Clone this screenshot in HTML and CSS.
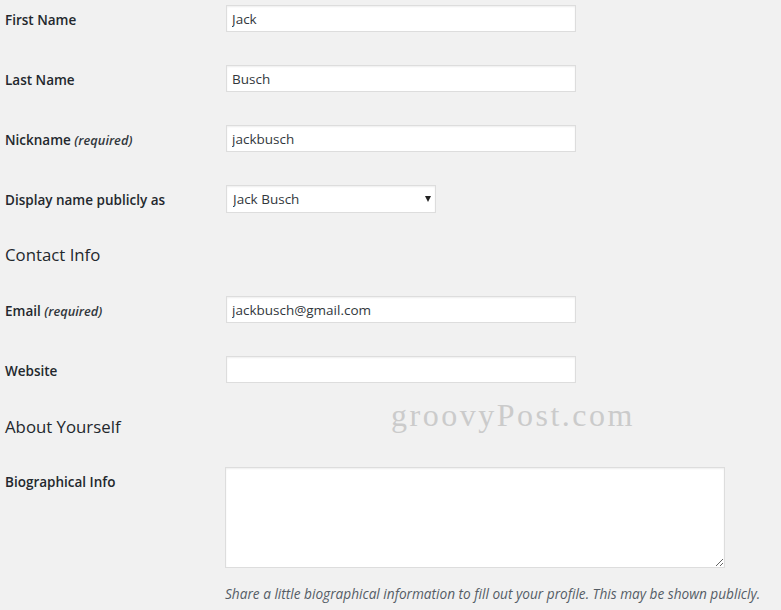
FILE: index.html
```html
<!DOCTYPE html>
<html lang="en">
<head>
<meta charset="utf-8">
<title>Profile</title>
<link rel="stylesheet" href="styles.css">
</head>
<body>
<div class="page">
  <div class="row">
    <label class="label" for="first">First Name</label>
    <input class="text-input" id="first" type="text" value="Jack">
  </div>
  <div class="row">
    <label class="label" for="last">Last Name</label>
    <input class="text-input" id="last" type="text" value="Busch">
  </div>
  <div class="row">
    <label class="label" for="nick">Nickname <span class="req">(required)</span></label>
    <input class="text-input" id="nick" type="text" value="jackbusch">
  </div>
  <div class="row">
    <label class="label" for="display">Display name publicly as</label>
    <div class="select-wrap">
      <select class="select" id="display">
        <option>Jack Busch</option>
      </select>
      <span class="arrow"></span>
    </div>
  </div>

  <h2 class="section-title">Contact Info</h2>

  <div class="row">
    <label class="label" for="email">Email <span class="req">(required)</span></label>
    <input class="text-input" id="email" type="text" value="jackbusch@gmail.com">
  </div>
  <div class="row">
    <label class="label" for="web">Website</label>
    <input class="text-input" id="web" type="text" value="">
  </div>

  <h2 class="section-title about">About Yourself</h2>

  <div class="row bio-row">
    <label class="label" for="bio">Biographical Info</label>
    <div class="bio-field">
      <textarea class="textarea" id="bio"></textarea>
      <p class="description">Share a little biographical information to fill out your profile. This may be shown publicly.</p>
    </div>
  </div>

  <div class="watermark">groovyPost.com</div>
</div>
</body>
</html>
```

FILE: styles.css
```css
html, body {
  margin: 0;
  padding: 0;
  background: #f1f1f1;
}

body {
  font-family: "Open Sans", "Noto Sans", sans-serif;
  font-size: 14px;
  color: #23282d;
}

.page {
  position: relative;
  padding: 0 5px;
}

.row {
  display: flex;
  align-items: flex-start;
  height: 60px;
  padding-top: 5px;
  box-sizing: border-box;
}

.label {
  width: 221px;
  flex: none;
  font-weight: 600;
  font-size: 13.5px;
  line-height: 27px;
  padding-top: 2px;
  color: #23282d;
}

.req {
  font-style: italic;
  font-weight: 600;
  font-size: 12.8px;
  color: #32373c;
}

.text-input {
  width: 350px;
  height: 27px;
  box-sizing: border-box;
  margin: 0;
  border: 1px solid #ddd;
  box-shadow: inset 0 1px 2px rgba(0, 0, 0, 0.07);
  background: #fff;
  padding: 0 5px;
  font-family: inherit;
  font-size: 13.5px;
  color: #32373c;
  outline: none;
}

.select-wrap {
  position: relative;
  width: 210px;
  height: 28px;
}

.select {
  appearance: none;
  -webkit-appearance: none;
  width: 210px;
  height: 28px;
  box-sizing: border-box;
  margin: 0;
  border: 1px solid #ddd;
  box-shadow: inset 0 1px 2px rgba(0, 0, 0, 0.07);
  background: #fff;
  padding: 0 20px 0 6px;
  font-family: inherit;
  font-size: 13.5px;
  color: #32373c;
  border-radius: 0;
  outline: none;
}

.arrow {
  position: absolute;
  right: 5px;
  top: 11px;
  width: 0;
  height: 0;
  border-left: 3.5px solid transparent;
  border-right: 3.5px solid transparent;
  border-top: 6px solid #222;
  pointer-events: none;
}

.section-title {
  margin: 0;
  height: 51px;
  padding-top: 4px;
  box-sizing: border-box;
  font-size: 16.8px;
  font-weight: 400;
  line-height: 22px;
  color: #23282d;
}

.section-title.about {
  padding-top: 5px;
  font-weight: 500;
}

.bio-row {
  height: auto;
}

.bio-field {
  margin-left: -1px;
}

.textarea {
  display: block;
  width: 500px;
  height: 101px;
  box-sizing: border-box;
  margin: 0;
  border: 1px solid #ddd;
  box-shadow: inset 0 1px 2px rgba(0, 0, 0, 0.07);
  background: #fff;
  font-family: inherit;
  font-size: 13.5px;
  outline: none;
}

.description {
  margin: 16px 0 0;
  font-style: italic;
  font-size: 13.65px;
  line-height: 20px;
  color: #555d66;
  white-space: nowrap;
}

.watermark {
  position: absolute;
  left: 391px;
  top: 397px;
  font-family: "Liberation Serif", "Times New Roman", serif;
  font-size: 32px;
  letter-spacing: 2.5px;
  color: #cbcbcb;
  pointer-events: none;
}
```
